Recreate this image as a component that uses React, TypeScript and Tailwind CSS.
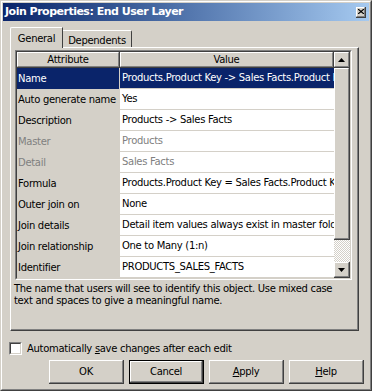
const font = "[font-family:'DejaVu_Sans',Tahoma,sans-serif]";

const rows = [
  { attr: "Name", value: "Products.Product Key -> Sales Facts.Product Key", selected: true },
  { attr: "Auto generate name", value: "Yes" },
  { attr: "Description", value: "Products -> Sales Facts" },
  { attr: "Master", value: "Products", disabled: true },
  { attr: "Detail", value: "Sales Facts", disabled: true },
  { attr: "Formula", value: "Products.Product Key = Sales Facts.Product Key" },
  { attr: "Outer join on", value: "None" },
  { attr: "Join details", value: "Detail item values always exist in master folder" },
  { attr: "Join relationship", value: "One to Many (1:n)" },
  { attr: "Identifier", value: "PRODUCTS_SALES_FACTS" },
];

function Raised({ className = "", children }: { className?: string; children?: React.ReactNode }) {
  return (
    <div className={`border-r border-b border-[#404040] ${className}`}>
      <div className="flex h-full w-full items-center justify-center border-t border-l border-r border-b border-t-white border-l-white border-r-[#808080] border-b-[#808080] bg-[#d4d0c8]">
        {children}
      </div>
    </div>
  );
}

function Arrow({ up }: { up?: boolean }) {
  return (
    <svg width="7" height="4" viewBox="0 0 7 4">
      <path d={up ? "M3.5 0 L7 4 L0 4 Z" : "M0 0 L7 0 L3.5 4 Z"} fill="#000" />
    </svg>
  );
}

function Button({ label, def, u }: { label: string; def?: boolean; u?: number }) {
  const text =
    u === undefined ? (
      label
    ) : (
      <>
        {label.slice(0, u)}
        <span className="underline">{label[u]}</span>
        {label.slice(u + 1)}
      </>
    );
  return (
    <div className={`h-[24px] w-[75px] ${def ? "border border-black" : ""}`}>
      <Raised className="h-full w-full">
        <span className="text-[10px] leading-none text-black">{text}</span>
      </Raised>
    </div>
  );
}

export default function App() {
  return (
    <div className={`h-[391px] w-[372px] ${font} tracking-[-0.3px] border-t border-l border-t-[#d4d0c8] border-l-[#d4d0c8] border-r border-b border-r-[#404040] border-b-[#404040] bg-[#d4d0c8] select-none`}>
      <div className="flex h-full flex-col border-t border-l border-t-white border-l-white border-r border-b border-r-[#808080] border-b-[#808080] p-px">
        {/* title bar */}
        <div className="flex h-[18px] items-center justify-between bg-gradient-to-r from-[#0a246a] to-[#a6caf0] pr-[3px] pl-[2px]">
          <span className="text-[11px] font-bold tracking-[-0.5px] text-white">Join Properties: End User Layer</span>
          <Raised className="h-[11px] w-[10px]">
            <svg width="6" height="5" viewBox="0 0 6 5">
              <path d="M0 0 L6 5 M6 0 L0 5" stroke="#000" strokeWidth="1.2" />
            </svg>
          </Raised>
        </div>

        {/* tabs */}
        <div className="ml-[7px] mt-[6px] flex items-end">
          <div className="relative z-10 -mb-px flex h-[21px] w-[53px] justify-center rounded-tl-[2px] border-t border-l border-t-white border-l-white border-r border-r-[#404040] bg-[#d4d0c8] pt-[3px] text-[10px] text-black">
            General
          </div>
          <div className="flex h-[17px] w-[69px] justify-center rounded-tr-[2px] border-t border-t-white border-r border-r-[#404040] bg-[#d4d0c8] pt-[2px] text-[10px] text-black">
            Dependents
          </div>
        </div>

        {/* tab panel */}
        <div className="ml-[7px] h-[284px] w-[349px] border-t border-l border-t-white border-l-white border-r border-b border-r-[#404040] border-b-[#404040]">
          <div className="h-full w-full border-r border-b border-r-[#808080] border-b-[#808080] pt-[2px] pl-[4px]">
            {/* grid */}
            <div className="w-[337px] border-t border-l border-t-[#808080] border-l-[#808080] border-r border-b border-r-white border-b-white">
              <div className="flex border-t border-l border-t-[#404040] border-l-[#404040] border-r border-b border-r-[#d4d0c8] border-b-[#d4d0c8]">
                <div className="flex-1 overflow-hidden bg-white">
                  <div className="flex h-[16px] text-[10px] text-black">
                    <Raised className="h-full w-[103px]">Attribute</Raised>
                    <Raised className="h-full flex-1">Value</Raised>
                  </div>
                  {rows.map((r) => (
                    <div
                      key={r.attr}
                      className={`flex h-[21px] text-[10px] leading-none ${
                        r.selected ? "bg-[#0a246a] text-white" : r.disabled ? "text-[#808080]" : "text-black"
                      }`}
                    >
                      <div
                        className={`flex w-[103px] items-center whitespace-nowrap pl-px ${
                          r.selected ? "" : "bg-[#d4d0c8]"
                        } border-r border-r-[#d4d0c8]`}
                      >
                        {r.attr}
                      </div>
                      <div className="flex flex-1 items-center overflow-hidden whitespace-nowrap border-b border-b-[#d4d0c8] pl-[2px]">
                        {r.value}
                      </div>
                    </div>
                  ))}
                </div>
                {/* scrollbar */}
                <div className="flex w-[16px] flex-col">
                  <Raised className="h-[16px] w-full">
                    <Arrow up />
                  </Raised>
                  <Raised className="h-[172px] w-full" />
                  <div className="h-[22px] bg-[repeating-conic-gradient(#ffffff_0%_25%,#d4d0c8_0%_50%)] bg-[length:2px_2px]" />
                  <Raised className="h-[16px] w-full">
                    <Arrow />
                  </Raised>
                </div>
              </div>
            </div>
            <p className="mt-[3px] -ml-px pr-[12px] text-[10px] leading-[12px] text-black">
              The name that users will see to identify this object. Use mixed case text and spaces to give a meaningful name.
            </p>
          </div>
        </div>

        {/* checkbox */}
        <div className="ml-[6px] mt-[10px] flex items-center gap-[5px]">
          <div className="h-[13px] w-[13px] border-t border-l border-t-[#808080] border-l-[#808080] border-r border-b border-r-white border-b-white">
            <div className="h-full w-full border-t border-l border-t-[#404040] border-l-[#404040] border-r border-b border-r-[#d4d0c8] border-b-[#d4d0c8] bg-white" />
          </div>
          <span className="text-[10px] text-black">
            Automatically <span className="underline">s</span>ave changes after each edit
          </span>
        </div>

        {/* buttons */}
        <div className="mr-[5px] mt-[4px] flex justify-end gap-[5px]">
          <Button label="OK" />
          <Button label="Cancel" def />
          <Button label="Apply" u={0} />
          <Button label="Help" u={0} />
        </div>
      </div>
    </div>
  );
}
